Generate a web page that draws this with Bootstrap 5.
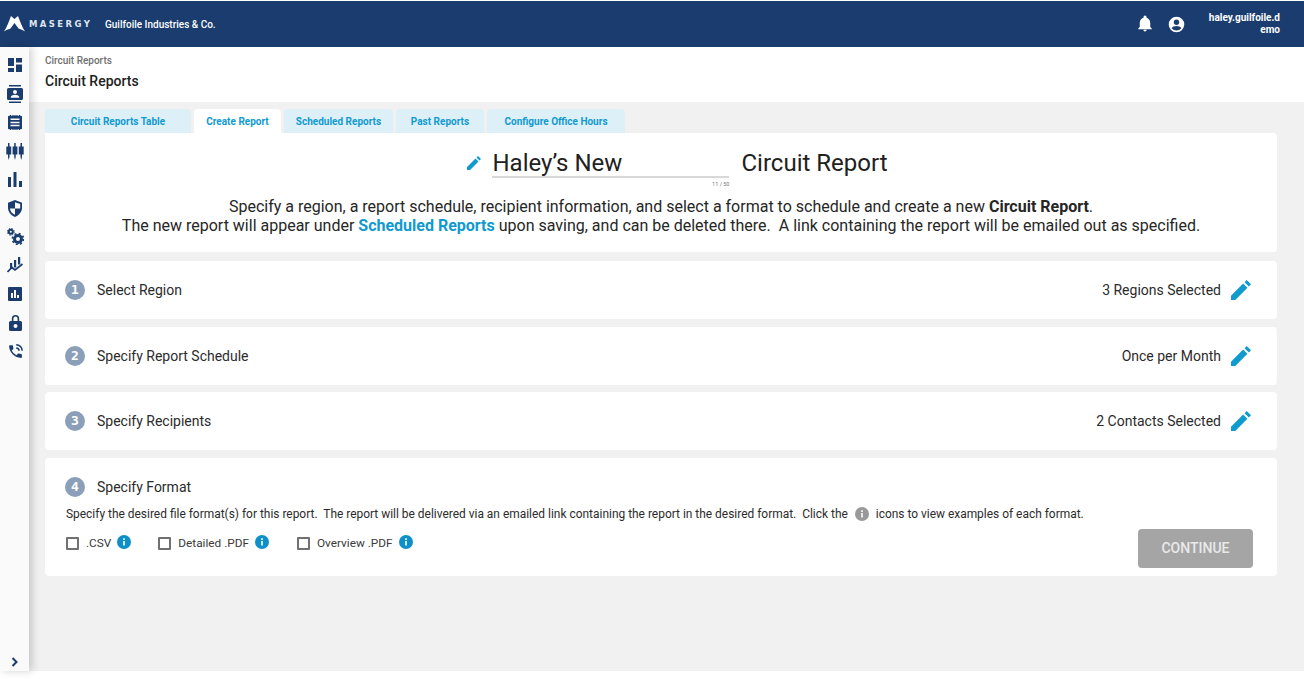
<!DOCTYPE html>
<html lang="en">
<head>
<meta charset="utf-8">
<title>Circuit Reports</title>
<link rel="stylesheet" href="https://cdn.jsdelivr.net/npm/bootstrap@5.3.0/dist/css/bootstrap.min.css">
<style>
html,body{height:679px;overflow:hidden;background:#fff;}
body{font-family:Roboto,"Liberation Sans",sans-serif;color:#212121;}
.appframe{height:671px;display:flex;flex-direction:column;}
.topbar{height:46px;margin-top:1px;background:#1a3c6e;color:#fff;flex:none;display:flex;align-items:center;padding:0 24px 0 4px;}
.wordmark{font-size:8.5px;font-weight:700;letter-spacing:2.4px;margin-left:4px;font-family:"DejaVu Sans",sans-serif;width:65px;white-space:nowrap;color:#dfe5ee;}
.company{font-size:10px;font-weight:500;margin-left:11px;}
.username{font-size:10px;font-weight:700;text-align:right;width:74px;line-height:12.5px;word-break:break-all;margin-left:18px;}
.bellic{margin-right:14px;}
.usermark{margin-right:3px;}
.bodyrow{flex:1;display:flex;min-height:0;}
.sidenav{width:29px;flex:none;background:#fafafa;display:flex;flex-direction:column;align-items:center;padding-top:4px;box-shadow:3px 0 8px rgba(0,0,0,.18);position:relative;z-index:2;}
.sideitem{height:28.6px;flex:none;display:flex;align-items:center;justify-content:center;margin-left:1px;}
.sidenav .chev{margin-top:auto;margin-bottom:4px;}
.content{flex:1;display:flex;flex-direction:column;min-width:0;background:#f1f1f1;}
.pagehead{height:55px;background:#fff;flex:none;padding:8px 16px 0 16px;}
.crumb{font-size:10px;font-weight:500;color:#6f6f6f;line-height:12px;}
.pagetitle{font-size:14px;font-weight:500;color:#212121;line-height:16px;margin-top:6px;}
.stage{padding:7px 27px 0 16px;}
.tabstrip{display:flex;gap:3px;height:24px;}
.tabitem{background:#def0f7;color:#0f9ad0;font-size:10px;font-weight:700;display:flex;align-items:center;justify-content:center;border-radius:4px 4px 0 0;height:24px;}
.tabitem.current{background:#fff;}
.panel{background:#fff;border-radius:4px;}
.intro{height:119px;border-radius:0 4px 4px 4px;text-align:center;padding-top:15px;}
.namerow{display:flex;justify-content:center;align-items:flex-start;height:49px;font-size:24px;line-height:28px;padding-left:33px;}
.namefield{width:237px;border-bottom:2px solid #d8d8d8;text-align:left;height:30px;margin-left:11px;position:relative;padding-top:1px;}
.counter{position:absolute;right:0;top:33px;font-size:5.5px;line-height:7px;color:#777;}
.suffix{margin-left:12px;padding-top:1px;}
.blurb{font-size:16px;line-height:19px;color:#262626;margin:0;}
.blurb b{font-weight:700;}
.blurb a{color:#0f9ad0;font-weight:700;text-decoration:none;}
.steprow{height:58px;margin-top:9px;display:flex;align-items:center;padding:0 26px 0 20px;}
.steprow.tight{margin-top:8px;}
.steprow.tighter{margin-top:7px;}
.stepnum{width:20px;height:20px;border-radius:50%;background:#8c9fb9;color:#fff;font-family:"DejaVu Sans Mono",monospace;font-size:13px;font-weight:700;display:flex;align-items:center;justify-content:center;flex:none;}
.steplabel{font-size:14px;margin-left:12px;color:#2b2b2b;}
.stepvalue{font-size:14px;margin-left:auto;margin-right:10px;color:#2b2b2b;}
.formatpanel{height:118px;margin-top:8px;padding:19px 24px 0 20px;position:relative;}
.formathead{display:flex;align-items:center;height:20px;}
.formatnote{font-size:11.95px;line-height:14px;margin:10px 0 0 1px;color:#2b2b2b;display:flex;align-items:center;white-space:pre;}
.formatopts{display:flex;align-items:center;margin:14px 0 0 1px;font-size:11.8px;color:#3a3a3a;}
.tick{width:13px;height:13px;border:2px solid #707070;border-radius:1px;flex:none;}
.optlabel{margin-left:7px;}
.infoic{margin-left:6px;flex:none;margin-top:-3px;}
.gapa{margin-left:27px;}
.gapb{margin-left:28px;}
.continuebtn{position:absolute;right:24px;top:71px;width:115px;height:39px;background:#a5a5a5;border:0;border-radius:4px;color:#e9e9e9;font-size:14px;font-weight:500;display:flex;align-items:center;justify-content:center;}
</style>
</head>
<body>
<div class="appframe">
  <header class="topbar">
    <svg width="21" height="16" viewBox="0 0 21 16"><path fill="#fff" d="M0 15.500C3 11 5 5 7 0L10.500 3 14 0C16 5 18 11 21 15.500 18 13.500 16 13 14.500 12.500L10.500 7 6.500 12.500C5 13 3 13.500 0 15.500Z"/></svg>
    <span class="wordmark">MASERGY</span>
    <span class="company">Guilfoile Industries &amp; Co.</span>
    <svg class="ms-auto bellic" width="18" height="18" viewBox="0 0 24 24"><path fill="#fff" d="M12 22a2.200 2.200 0 0 0 2.200-2.200H9.800A2.200 2.200 0 0 0 12 22Zm7-6V10.500c0-3.400-1.900-6.200-5-7V2.800a2 2 0 0 0-4 0v.7c-3.100.7-5 3.600-5 7V16l-2 2v1h18v-1Z"/></svg>
    <svg class="usermark" width="17" height="17" viewBox="0 0 24 24"><path fill="#fff" fill-rule="evenodd" d="M12 1a11 11 0 1 0 0 22 11 11 0 0 0 0-22Zm0 4a3.800 3.800 0 1 1 0 7.600A3.800 3.800 0 0 1 12 5Zm0 15.600a8.600 8.600 0 0 1-6.800-3.400c.5-2 4.500-3 6.800-3s6.300 1 6.800 3a8.600 8.600 0 0 1-6.800 3.400Z"/></svg>
    <div class="username">haley.guilfoile.demo</div>
  </header>
  <div class="bodyrow">
    <nav class="sidenav">
      <div class="sideitem"><svg width="14" height="14" viewBox="0 0 14 14"><path fill="#1a3c6e" d="M0 0h6v8H0ZM8 0h6v4.500H8ZM8 6.500h6V14H8ZM0 10h6v4H0Z"/></svg></div>
      <div class="sideitem"><svg width="16" height="18" viewBox="0 0 16 18"><path fill="#1a3c6e" fill-rule="evenodd" d="M2 0h12v1.500H2ZM2 16.500h12V18H2ZM1.500 3h13A1.500 1.500 0 0 1 16 4.500v9a1.500 1.500 0 0 1-1.500 1.500h-13A1.500 1.500 0 0 1 0 13.500v-9A1.500 1.500 0 0 1 1.500 3ZM8 5a2 2 0 1 0 0 4 2 2 0 0 0 0-4ZM3.800 12.800h8.400v-1c0-1.300-2.800-2-4.200-2s-4.200.7-4.200 2Z"/></svg></div>
      <div class="sideitem"><svg width="14" height="15" viewBox="0 0 14 15"><path fill="#1a3c6e" fill-rule="evenodd" d="M1 .7h12a1 1 0 0 1 1 1v11.600a1 1 0 0 1-1 1H1a1 1 0 0 1-1-1V1.700a1 1 0 0 1 1-1Zm1.500 2.900v1.500h9V3.600Zm0 3.100v1.500h9V6.700Zm0 3.100v1.500h9V9.800Z"/><path fill="#1a3c6e" d="M2 0h1v1H2ZM4.500 0h1v1h-1ZM6.500 0h1v1h-1ZM8.500 0h1v1h-1ZM11 0h1v1h-1ZM2 14h1v1H2ZM4.500 14h1v1h-1ZM6.500 14h1v1h-1ZM8.500 14h1v1h-1ZM11 14h1v1h-1Z"/></svg></div>
      <div class="sideitem"><svg width="18" height="17" viewBox="0 0 18 17"><path fill="#1a3c6e" d="M2 0h1.500v3.500H5.200v8H3.500V14L2.700 17 2 14V11.500H.3v-8H2ZM8.200 0h1.500v3.500h1.700v8H9.700V14L9 17l-.8-3V11.500H6.600v-8h1.600ZM14.500 0H16v3.500h1.700v8H16V14L15.200 17l-.7-3V11.500h-1.700v-8h1.700Z"/></svg></div>
      <div class="sideitem"><svg width="14" height="15" viewBox="0 0 14 15"><path fill="#1a3c6e" d="M0 5h3v10H0ZM5.500 0h3v15h-3ZM11 9h3v6h-3Z"/></svg></div>
      <div class="sideitem"><svg width="14" height="17" viewBox="0 0 14 17"><path fill="#1a3c6e" fill-rule="evenodd" d="M7 0 14 2.800v5C14 12 11 15.500 7 17 3 15.500 0 12 0 7.800v-5ZM7 2.200v6.300H1.900c.4 3 2.500 5.300 5.100 6.300V8.500h5.100c.1-.5.100-.8.100-1.200V4Z"/></svg></div>
      <div class="sideitem"><svg width="17" height="17" viewBox="0 0 17 17"><g fill="none" stroke="#1a3c6e"><circle cx="3.800" cy="3.800" r="2" stroke-width="2"/><circle cx="11" cy="11" r="3.500" stroke-width="3"/><circle cx="11" cy="11" r="5.600" stroke-width="1.600" stroke-dasharray="2 2.400"/><circle cx="3.800" cy="3.800" r="3.400" stroke-width="1" stroke-dasharray="1.500 1.200"/></g></svg></div>
      <div class="sideitem"><svg width="16" height="16" viewBox="0 0 16 16"><path fill="#1a3c6e" d="M3 6h2.200v6H3ZM7 3h2.200v7.500H7ZM11 0h2.200v7.500H11Z"/><path fill="none" stroke="#1a3c6e" stroke-width="1.700" d="M.5 15 5 10.500l3 2.500 7.500-6"/></svg></div>
      <div class="sideitem"><svg width="14" height="14" viewBox="0 0 14 14"><path fill="#1a3c6e" fill-rule="evenodd" d="M1 0h12a1 1 0 0 1 1 1v12a1 1 0 0 1-1 1H1a1 1 0 0 1-1-1V1a1 1 0 0 1 1-1Zm2 6v5h2V6Zm3-3v8h2V3Zm3 5v3h2V8Z"/></svg></div>
      <div class="sideitem"><svg width="13" height="16" viewBox="0 0 13 16"><path fill="#1a3c6e" fill-rule="evenodd" d="M6.500 0a3.700 3.700 0 0 1 3.700 3.700V6h1.300A1.500 1.500 0 0 1 13 7.500v7a1.500 1.500 0 0 1-1.500 1.500h-10A1.500 1.500 0 0 1 0 14.500v-7A1.500 1.500 0 0 1 1.500 6h1.300V3.700A3.700 3.700 0 0 1 6.500 0Zm0 1.600a2.100 2.100 0 0 0-2.100 2.100V6h4.200V3.700a2.100 2.100 0 0 0-2.100-2.100Zm0 7.400a2 2 0 1 0 0 4 2 2 0 0 0 0-4Z"/></svg></div>
      <div class="sideitem"><svg width="17" height="17" viewBox="0 0 24 24"><path fill="#1a3c6e" d="M20 15.500a11 11 0 0 1-3.600-.6 1 1 0 0 0-1 .2l-2.200 2.200a15 15 0 0 1-6.600-6.600l2.200-2.200a1 1 0 0 0 .3-1A11 11 0 0 1 8.500 4a1 1 0 0 0-1-1H4a1 1 0 0 0-1 1 17 17 0 0 0 17 17 1 1 0 0 0 1-1v-3.500a1 1 0 0 0-1-1Z"/><path fill="none" stroke="#1a3c6e" stroke-width="2.200" d="M13 7a4 4 0 0 1 4 4M13 2.500a8.500 8.500 0 0 1 8.500 8.500"/></svg></div>
      <svg class="chev" width="8" height="10" viewBox="0 0 8 10"><path fill="none" stroke="#1a3c6e" stroke-width="2" d="M1.500 1 5.500 5l-4 4"/></svg>
    </nav>
    <main class="content">
      <div class="pagehead">
        <div class="crumb">Circuit Reports</div>
        <div class="pagetitle">Circuit Reports</div>
      </div>
      <div class="stage">
        <div class="tabstrip">
          <div class="tabitem" style="width:146px">Circuit Reports Table</div>
          <div class="tabitem current" style="width:87px">Create Report</div>
          <div class="tabitem" style="width:109px">Scheduled Reports</div>
          <div class="tabitem" style="width:88px">Past Reports</div>
          <div class="tabitem" style="width:138px">Configure Office Hours</div>
        </div>
        <section class="panel intro">
          <div class="namerow">
            <svg class="mt-2" width="14" height="14" viewBox="0 0 14 14"><path fill="#0f9ad0" d="M0 14v-3L8.500 2.500l3 3L3 14ZM9.500 1.500 11 0l3 3-1.500 1.500Z"/></svg>
            <div class="namefield">Haley’s New<span class="counter">11 / 50</span></div>
            <div class="suffix">Circuit Report</div>
          </div>
          <p class="blurb">Specify a region, a report schedule, recipient information, and select a format to schedule and create a new <b>Circuit Report</b>.<br>The new report will appear under <a href="#">Scheduled Reports</a> upon saving, and can be deleted there.&nbsp; A link containing the report will be emailed out as specified.</p>
        </section>
        <section class="panel steprow">
          <span class="stepnum">1</span><span class="steplabel">Select Region</span>
          <span class="stepvalue">3 Regions Selected</span>
          <svg width="20" height="20" viewBox="0 0 14 14"><path fill="#0f9ad0" d="M0 14v-3L8.500 2.500l3 3L3 14ZM9.500 1.500 11 0l3 3-1.500 1.500Z"/></svg>
        </section>
        <section class="panel steprow tight">
          <span class="stepnum">2</span><span class="steplabel">Specify Report Schedule</span>
          <span class="stepvalue">Once per Month</span>
          <svg width="20" height="20" viewBox="0 0 14 14"><path fill="#0f9ad0" d="M0 14v-3L8.500 2.500l3 3L3 14ZM9.500 1.500 11 0l3 3-1.500 1.500Z"/></svg>
        </section>
        <section class="panel steprow tighter">
          <span class="stepnum">3</span><span class="steplabel">Specify Recipients</span>
          <span class="stepvalue">2 Contacts Selected</span>
          <svg width="20" height="20" viewBox="0 0 14 14"><path fill="#0f9ad0" d="M0 14v-3L8.500 2.500l3 3L3 14ZM9.500 1.500 11 0l3 3-1.500 1.500Z"/></svg>
        </section>
        <section class="panel formatpanel">
          <div class="formathead"><span class="stepnum">4</span><span class="steplabel">Specify Format</span></div>
          <p class="formatnote">Specify the desired file format(s) for this report.  The report will be delivered via an emailed link containing the report in the desired format.  Click the <svg class="mx-1" width="14" height="14" viewBox="0 0 14 14"><circle cx="7" cy="7" r="7" fill="#999"/><path fill="#fff" d="M6.200 6h1.600v4.500H6.200ZM6.200 3.300h1.600v1.600H6.200Z"/></svg> icons to view examples of each format.</p>
          <div class="formatopts">
            <span class="tick"></span><span class="optlabel">.CSV</span>
            <svg class="infoic" width="14" height="14" viewBox="0 0 14 14"><circle cx="7" cy="7" r="7" fill="#0f8fc7"/><path fill="#fff" d="M6.200 6h1.600v4.500H6.200ZM6.200 3.300h1.600v1.600H6.200Z"/></svg>
            <span class="tick gapa"></span><span class="optlabel">Detailed .PDF</span>
            <svg class="infoic" width="14" height="14" viewBox="0 0 14 14"><circle cx="7" cy="7" r="7" fill="#0f8fc7"/><path fill="#fff" d="M6.200 6h1.600v4.500H6.200ZM6.200 3.300h1.600v1.600H6.200Z"/></svg>
            <span class="tick gapb"></span><span class="optlabel">Overview .PDF</span>
            <svg class="infoic" width="14" height="14" viewBox="0 0 14 14"><circle cx="7" cy="7" r="7" fill="#0f8fc7"/><path fill="#fff" d="M6.200 6h1.600v4.500H6.200ZM6.200 3.300h1.600v1.600H6.200Z"/></svg>
          </div>
          <button type="button" class="btn continuebtn">CONTINUE</button>
        </section>
      </div>
    </main>
  </div>
</div>
<script src="https://cdn.jsdelivr.net/npm/bootstrap@5.3.0/dist/js/bootstrap.bundle.min.js"></script>
</body>
</html>
